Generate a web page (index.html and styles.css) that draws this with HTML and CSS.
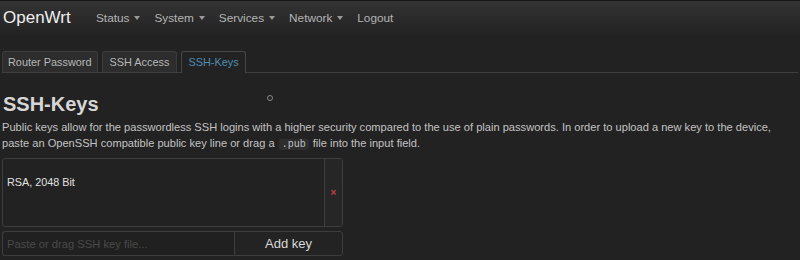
FILE: index.html
```html
<!DOCTYPE html>
<html>
<head>
<meta charset="utf-8">
<link rel="stylesheet" href="styles.css">
</head>
<body>
<header class="navbar">
  <a class="brand">OpenWrt</a>
  <nav class="menu">
    <span class="item">Status <span class="caret"></span></span>
    <span class="item">System <span class="caret"></span></span>
    <span class="item">Services <span class="caret"></span></span>
    <span class="item">Network <span class="caret"></span></span>
    <span class="item">Logout</span>
  </nav>
</header>
<main class="content">
  <ul class="tabs">
    <li class="tab">Router Password</li>
    <li class="tab tab-wide">SSH Access</li>
    <li class="tab active">SSH-Keys</li>
  </ul>
  <div class="title-row">
    <h2 class="title">SSH-Keys</h2>
    <span class="spinner"></span>
  </div>
  <p class="desc">Public keys allow for the passwordless SSH logins with a higher security compared to the use of plain passwords. In order to upload a new key to the device, paste an OpenSSH compatible public key line or drag a <code>.pub</code> file into the input field.</p>
  <div class="keylist">
    <div class="keyinfo">RSA, 2048 Bit</div>
    <div class="keydel">×</div>
  </div>
  <div class="addrow">
    <input class="keyinput" type="text" placeholder="Paste or drag SSH key file...">
    <button class="addbtn">Add key</button>
  </div>
</main>
</body>
</html>
```
FILE: styles.css
```css
html, body {
  margin: 0;
  padding: 0;
  background: #222222;
  font-family: "Liberation Sans", Arial, sans-serif;
  color: #c8c8c8;
}
.navbar {
  height: 36px;
  box-sizing: border-box;
  border-top: 1px solid #161616;
  background: linear-gradient(#333333, #222222);
  display: flex;
  align-items: center;
  padding-left: 3px;
}
.brand {
  color: #eeeeee;
  font-size: 17px;
  width: 93px;
  margin-top: -2px;
}
.menu {
  display: flex;
  font-size: 11.8px;
  color: #b4b4b4;
  margin-top: -2px;
}
.item {
  display: flex;
  align-items: center;
  margin-right: 14px;
}
.caret {
  display: inline-block;
  width: 0;
  height: 0;
  border-left: 3.5px solid transparent;
  border-right: 3.5px solid transparent;
  border-top: 4px solid #9a9a9a;
  margin-left: 5px;
}
.content {
  padding: 0 2px;
}
.tabs {
  list-style: none;
  margin: 15px 0 0 0;
  padding: 0;
  display: flex;
  gap: 4px;
  border-bottom: 1px solid #3e3e3e;
  height: 21px;
}
.tab {
  box-sizing: border-box;
  height: 21px;
  padding: 0 5px;
  font-size: 10.9px;
  line-height: 21px;
  color: #b8b8b8;
  background: #2d2d2d;
  border: 1px solid #3c3c3c;
  border-bottom: none;
  border-radius: 3px 3px 0 0;
}
.tab-wide {
  padding: 0 7px;
}
.tab.active {
  background: #222222;
  color: #4f8db5;
  border-color: #474747;
  height: 22px;
  padding: 0 6px;
}
.title-row {
  display: flex;
  align-items: flex-start;
  margin-top: 20px;
}
.title {
  margin: 0 0 0 1px;
  font-size: 20px;
  font-weight: bold;
  color: #d6d6d6;
  line-height: 22px;
  width: 264px;
}
.spinner {
  width: 4px;
  height: 4px;
  border: 1px solid #8a8a8a;
  border-radius: 50%;
  margin-top: 2px;
}
.desc {
  margin: 4px 0 0 0;
  font-size: 11.1px;
  line-height: 16px;
  color: #c2c2c2;
}
code {
  font-family: "Liberation Mono", monospace;
  font-size: 10px;
  line-height: 12px;
  background: #2e2e2e;
  padding: 0 3px;
  margin: 0 1px;
  border-radius: 2px;
  color: #c0c0c0;
}
.keylist {
  margin-top: 7px;
  width: 341px;
  height: 69px;
  box-sizing: border-box;
  border: 1px solid #3e3e3e;
  border-radius: 3px;
  display: flex;
}
.keyinfo {
  flex: 1;
  font-size: 10.8px;
  color: #e0e0e0;
  padding: 17px 0 0 4px;
  border-right: 1px solid #3e3e3e;
}
.keydel {
  width: 17px;
  background: #262626;
  color: #c04050;
  font-size: 10px;
  font-weight: bold;
  display: flex;
  align-items: center;
  justify-content: center;
}
.addrow {
  margin-top: 4px;
  width: 341px;
  height: 25px;
  display: flex;
}
.keyinput {
  box-sizing: border-box;
  width: 232px;
  height: 25px;
  margin: 0;
  background: #202020;
  border: 1px solid #3e3e3e;
  border-right: none;
  border-radius: 3px 0 0 3px;
  font-family: "Liberation Sans", Arial, sans-serif;
  font-size: 11.2px;
  color: #c8c8c8;
  padding: 0 4px;
}
.keyinput::placeholder {
  color: #4a4a4a;
}
.addbtn {
  box-sizing: border-box;
  flex: 1;
  height: 25px;
  margin: 0;
  background: #232323;
  border: 1px solid #3e3e3e;
  border-radius: 0 3px 3px 0;
  font-family: "Liberation Sans", Arial, sans-serif;
  font-size: 13px;
  color: #d8d8d8;
}
```
